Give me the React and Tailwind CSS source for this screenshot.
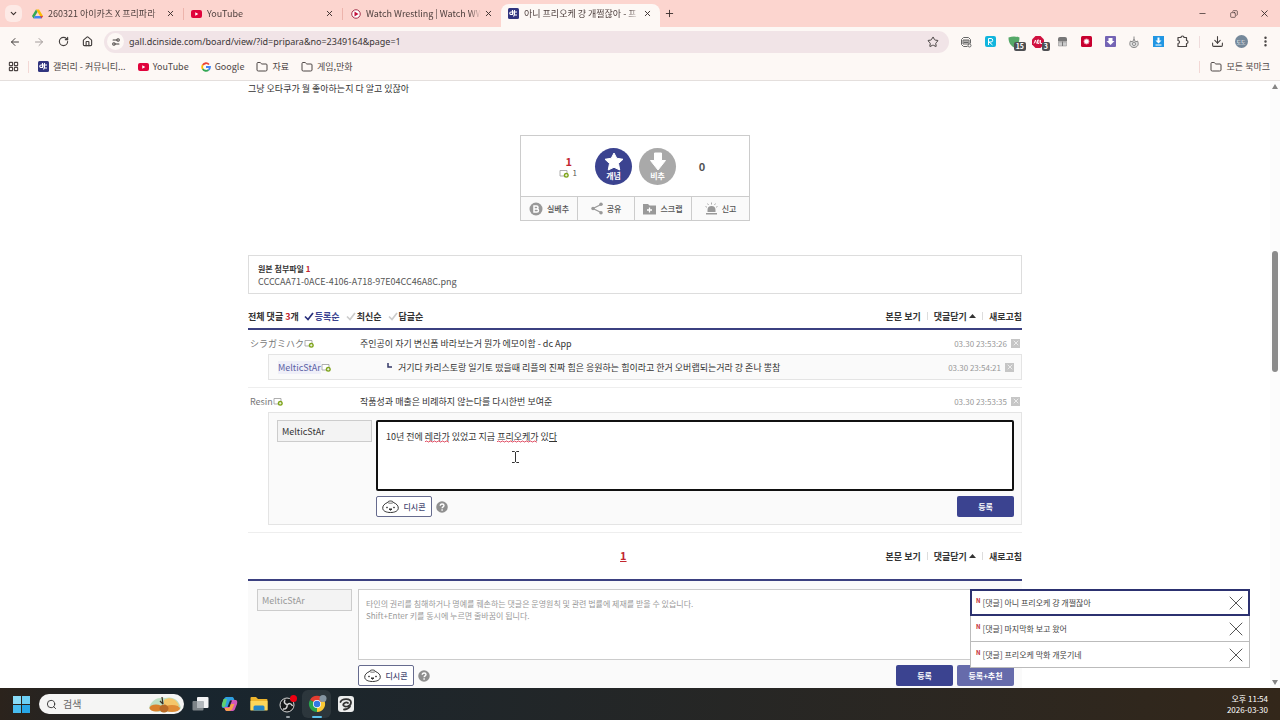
import React from "react";
import {
  ArrowLeft, ArrowRight, ChevronDown, Copy, Download, EllipsisVertical, Folder, House, LayoutGrid,
  Minus, Plus, RotateCw, Search, Settings2, Star, X,
} from "lucide-react";

const DriveIcon = () => (
  <svg width="11" height="10" viewBox="0 0 22 20">
    <path d="M8 1h6l8 13h-6z" fill="#fbbc04" />
    <path d="M8 1 0 14l3 5L11 6z" fill="#34a853" />
    <path d="M6 14h16l-3 5H3z" fill="#4285f4" />
    <path d="M16 14h6l-3 5z" fill="#ea4335" />
  </svg>
);

const YoutubeIcon = () => (
  <svg width="11" height="8" viewBox="0 0 22 16">
    <rect width="22" height="16" rx="4" fill="#e0033b" />
    <path d="M8.500 4.500v7l6-3.500z" fill="#fff" />
  </svg>
);

const WatchIcon = () => (
  <svg width="10" height="10" viewBox="0 0 20 20">
    <circle cx="10" cy="10" r="8.500" fill="#fff" stroke="#a3304a" strokeWidth="2" />
    <path d="M7 5v10l8-5z" fill="#c4103a" />
  </svg>
);

const DcIcon = () => (
  <svg width="11" height="11" viewBox="0 0 22 22">
    <rect width="22" height="22" rx="3" fill="#31357f" />
    <path d="M9 4v9H6a2.500 2.500 0 0 1 0-5h7M18 8h-3a3 3 0 0 0 0 6h3M13 4v9l-2 4" fill="none" stroke="#fff" strokeWidth="2.200" />
  </svg>
);

const GoogleIcon = () => (
  <svg width="10" height="10" viewBox="0 0 20 20" fill="none" strokeWidth="3.600">
    <path d="M16 5A8 8 0 0 0 3.500 6" stroke="#ea4335" />
    <path d="M3.500 6a8 8 0 0 0 0 8" stroke="#fbbc04" />
    <path d="M3.500 14A8 8 0 0 0 15 16" stroke="#34a853" />
    <path d="M15 16a8 8 0 0 0 3-6h-8" stroke="#4285f4" />
  </svg>
);

const NickIcon = () => (
  <svg width="10" height="9" viewBox="0 0 20 18" className="shrink-0">
    <path d="M2 3h14v11H2z" fill="#fff" stroke="#9a9a9a" strokeWidth="1.600" />
    <circle cx="14.500" cy="12.500" r="5" fill="#7fa51c" />
    <path d="M14.500 10v5M12 12.500h5" stroke="#fff" strokeWidth="1.600" />
  </svg>
);

const CheckIcon = ({ color }) => (
  <svg width="10" height="9" viewBox="0 0 20 18" className="shrink-0">
    <path d="M2 9l6 6L18 2" fill="none" stroke={color} strokeWidth="3.400" />
  </svg>
);

const DcconIcon = () => (
  <svg width="17" height="13" viewBox="0 0 34 26" fill="none" stroke="#333" strokeWidth="2">
    <path d="M11 5C4 8 1 12 1.500 17c.5 5 7 8 15.500 8s15-3 15.500-8C33 12 30 8 23 5c-1-4-11-4-12 0z" fill="#fff" />
    <path d="M11 5c3 2 9 2 12 0" strokeWidth="1.400" />
    <circle cx="10" cy="15" r="1" />
    <circle cx="24" cy="15" r="1" />
    <path d="M14 18h6l-3 2.500z" fill="#333" />
  </svg>
);

const HelpIcon = () => (
  <svg width="12" height="12" viewBox="0 0 24 24">
    <circle cx="12" cy="12" r="11.500" fill="#8f8f8f" />
    <path d="M8.500 9.500c0-5 7.500-4.500 7.500-.5 0 2.600-3.800 2.800-3.800 5.500M12.200 16.500v3" fill="none" stroke="#fff" strokeWidth="2.800" />
  </svg>
);

const tabs = [
  { icon: <DriveIcon />, title: "260321 아이카츠 X 프리파라" },
  { icon: <YoutubeIcon />, title: "YouTube" },
  { icon: <WatchIcon />, title: "Watch Wrestling | Watch WW" },
  { icon: <DcIcon />, title: "아니 프리오케 걍 개쩔잖아 - 프", active: true },
];

const Tab = ({ icon, title, active }) => (
  <div className={active
    ? "relative mt-1 flex h-[23px] min-w-0 max-w-[159px] flex-1 items-center rounded-t-lg bg-[#fdf8f5] pr-1.5 pb-1 pl-[7px]"
    : "relative mt-1 flex h-[23px] min-w-0 max-w-[159px] flex-1 items-center pr-1.5 pb-1 pl-2"}
  >
    <span className="flex w-[11px] shrink-0 justify-center">{icon}</span>
    <span className="ml-[5px] flex-1 overflow-hidden whitespace-nowrap mask-r-from-90% text-[#4d3f3d]">{title}</span>
    <button type="button" aria-label="탭 닫기" className="flex size-[14px] shrink-0 items-center justify-center">
      <X size={9} strokeWidth={2.5} />
    </button>
  </div>
);

const BrowserTabs = () => (
  <header className="flex h-[27px] shrink-0 bg-[#fcd5cf] text-[9px] leading-3 text-[#3b2f2e]">
    <button type="button" aria-label="탭 검색" className="mt-[5px] ml-[5px] flex size-[17px] items-center justify-center rounded-md bg-[#fdeae6]">
      <ChevronDown size={9} strokeWidth={3} />
    </button>
    <div className="ml-0.5 flex flex-1">
      {tabs.map((tab, i) => (
        <React.Fragment key={tab.title}>
          {(i === 1 || i === 2) && <i className="-mr-px mt-2 h-3 w-px bg-[#edb4ac]" />}
          <Tab {...tab} />
        </React.Fragment>
      ))}
      <button type="button" aria-label="새 탭" className="mb-px px-1"><Plus size={11} /></button>
    </div>
    <div className="flex">
      <button type="button" aria-label="최소화" className="flex w-[31px] items-center justify-center"><Minus size={9} /></button>
      <button type="button" aria-label="창 복원" className="flex w-[31px] items-center justify-center"><Copy size={8} className="-scale-x-100" /></button>
      <button type="button" aria-label="닫기" className="flex w-[31px] items-center justify-center"><X size={11} /></button>
    </div>
  </header>
);

const extensions = [
  { name: "캡처", icon: (
    <svg width="12" height="12" viewBox="0 0 24 24" fill="none" stroke="#666" strokeWidth="2">
      <path d="M3 7l4-4h10l4 4M3 17l4 4h8M6 8h12v8H6zM7 10h10M7 13h10M3 7v10M21 7v8" /><circle cx="19" cy="19" r="3" />
    </svg>
  ) },
  { name: "R", icon: (
    <svg width="11" height="11" viewBox="0 0 22 22">
      <rect width="22" height="22" rx="4" fill="#12b5dd" />
      <path d="M7 18V5h5a3 3 0 0 1 0 7H8l7 6" fill="none" stroke="#fff" strokeWidth="2" />
    </svg>
  ) },
  { name: "가드", badge: "15", icon: (
    <svg width="12" height="12" viewBox="0 0 24 24"><path d="M1 3c8-3 14-3 22 0 0 10-4 16-11 20C5 19 1 13 1 3z" fill="#55a868" /></svg>
  ) },
  { name: "차단", badge: "3", icon: (
    <svg width="12" height="12" viewBox="0 0 24 24">
      <path d="M7 0h10l7 7v10l-7 7H7l-7-7V7z" fill="#d0103f" />
      <path d="M4 15l3-7 2 7M11 8v7h3V8h-3M17 8v7h4" fill="none" stroke="#fff" strokeWidth="1.800" />
    </svg>
  ) },
  { name: "블록", icon: (
    <svg width="11" height="11" viewBox="0 0 22 22"><path d="M2 11V6q0-4 4-4h10q4 0 4 4v5z" fill="#777" /><path d="M3 12h16v8H3z" fill="#ccc" stroke="#888" /><path d="M11 11v9" stroke="#777" strokeWidth="2" /></svg>
  ) },
  { name: "녹화", icon: (
    <svg width="11" height="11" viewBox="0 0 22 22"><rect width="22" height="22" rx="3" fill="#c8002f" /><circle cx="11" cy="11" r="5" fill="#fff" stroke="#f19ab0" strokeWidth="2" /></svg>
  ) },
  { name: "저장", icon: (
    <svg width="11" height="11" viewBox="0 0 22 22"><rect width="22" height="22" rx="2" fill="#7464b4" /><path d="M7 4h8v6h4l-8 8-8-8h4z" fill="#fff" /></svg>
  ) },
  { name: "불꽃", icon: (
    <svg width="12" height="12" viewBox="0 0 24 24" fill="none" stroke="#888" strokeWidth="2"><path d="M12 1v5M5 10c-4 8 1 13 7 13s11-5 7-13l-4 2-3-6-3 6z" fill="#ddd" /><circle cx="12" cy="16" r="3" fill="#fff" /></svg>
  ) },
  { name: "다운로더", icon: (
    <svg width="11" height="11" viewBox="0 0 22 22"><rect width="22" height="22" fill="#2196e3" /><path d="M9 3h4v6h4l-6 6-6-6h4zM5 17h12v2H5z" fill="#fff" /></svg>
  ) },
  { name: "확장 프로그램", icon: (
    <svg width="13" height="13" viewBox="0 0 26 26" fill="none" stroke="#4a4544" strokeWidth="2.400">
      <path d="M4 5h6c0-4 6-4 6 0h5v6c4 0 4 6 0 6v6H4v-6c4 0 4-6 0-6z" strokeLinejoin="round" />
    </svg>
  ) },
];

const toolButton = "relative flex h-6 w-6 shrink-0 items-center justify-center";

const Toolbar = () => (
  <div className="flex h-[29px] shrink-0 items-center bg-[#fdf8f5] pr-[3px] pl-[3px] text-[#45403f]">
    <button type="button" aria-label="뒤로" className={toolButton}><ArrowLeft size={12} /></button>
    <button type="button" aria-label="앞으로" className={toolButton}><ArrowRight size={12} className="text-[#a39c9b]" /></button>
    <button type="button" aria-label="새로고침" className={toolButton}><RotateCw size={11} strokeWidth={2.5} /></button>
    <button type="button" aria-label="홈" className={toolButton}><House size={11} strokeWidth={2.5} /></button>
    <div className="mx-[5px] flex h-[22px] flex-1 items-center rounded-full bg-[#f1e4e7] pr-[10px] pl-[3px]">
      <span className="mr-[5px] flex size-[17px] items-center justify-center rounded-full bg-[#fdf8f5]">
        <Settings2 size={10} className="-scale-x-100" strokeWidth={2.5} />
      </span>
      <input aria-label="주소창" readOnly value="gall.dcinside.com/board/view/?id=pripara&no=2349164&page=1" className="min-w-0 flex-1 bg-transparent font-['Noto_Sans',sans-serif] text-[9px] leading-3 text-[#3a3536]" />
      <Star size={12} />
    </div>
    {extensions.map((ext) => (
      <button key={ext.name} type="button" aria-label={ext.name} className={toolButton}>
        {ext.icon}
        {ext.badge && (
          <span className="absolute right-0 bottom-[3px] rounded-xs bg-[#4e5053] px-0.5 text-[7px] leading-[9px] font-bold text-white">{ext.badge}</span>
        )}
      </button>
    ))}
    <i className="mx-[5px] h-3 w-px bg-[#efdcdc]" />
    <button type="button" aria-label="다운로드" className={toolButton}><Download size={13} /></button>
    <button type="button" aria-label="프로필" className={toolButton}>
      <span className="size-[13px] rounded-full bg-[#75889a] text-center text-[5px] leading-[13px] text-white">도도</span>
    </button>
    <button type="button" aria-label="메뉴" className={toolButton}><EllipsisVertical size={13} strokeWidth={2.5} /></button>
  </div>
);

const bookmarks = [
  { label: "갤러리 - 커뮤니티...", icon: <DcIcon /> },
  { label: "YouTube", icon: <YoutubeIcon /> },
  { label: "Google", icon: <GoogleIcon /> },
  { label: "자료", icon: <Folder size={12} /> },
  { label: "게임,만화", icon: <Folder size={12} /> },
];

const Bookmarks = () => (
  <nav className="flex h-[25px] shrink-0 items-center border-b border-[#e4dfdd] bg-[#fdf8f5] pb-[3px] pl-2 text-[9px] leading-3 text-[#4d4645]">
    <LayoutGrid size={11} strokeWidth={2.5} />
    <i className="mx-[9px] h-3 w-px bg-[#f3d8d5]" />
    <div className="flex gap-3">
      {bookmarks.map((item) => (
        <a key={item.label} href="#" className="flex items-center gap-1 whitespace-nowrap">{item.icon}{item.label}</a>
      ))}
    </div>
    <i className="mr-[10px] ml-auto h-3 w-px bg-[#f3d8d5]" />
    <a href="#" className="flex items-center gap-[5px] pr-[10px] whitespace-nowrap"><Folder size={12} />모든 북마크</a>
  </nav>
);

const voteActions = [
  { label: "실베추", icon: (
    <svg width="14" height="14" viewBox="0 0 28 28"><circle cx="14" cy="14" r="13" fill="#999" /><path d="M10 8h5a3 3 0 0 1 0 6h-5zM10 14h6a3 3 0 0 1 0 6h-6z" fill="none" stroke="#fff" strokeWidth="3" /></svg>
  ) },
  { label: "공유", icon: (
    <svg width="12" height="13" viewBox="0 0 24 26" fill="#999"><path d="M20 5 4 13l16 8" fill="none" stroke="#999" strokeWidth="2.500" /><circle cx="20" cy="4.500" r="3.500" /><circle cx="4" cy="13" r="3.500" /><circle cx="20" cy="21.500" r="3.500" /></svg>
  ) },
  { label: "스크랩", icon: (
    <svg width="13" height="12" viewBox="0 0 26 24"><path d="M0 2h10l3 3h13v18H0z" fill="#999" /><path d="M13 9v10M8 14h10" stroke="#fff" strokeWidth="2.600" /></svg>
  ) },
  { label: "신고", icon: (
    <svg width="13" height="13" viewBox="0 0 26 26"><path d="M5 20v-4a8 8 0 0 1 16 0v4zM2 22h22v3H2z" fill="#999" /><path d="M13 1v4M5 3l2 3M21 3l-2 3M1 9l3 1.500M25 9l-3 1.500" stroke="#999" strokeWidth="1.600" /></svg>
  ) },
];

const VoteBox = () => (
  <section className="mx-auto mt-[38px] w-[230px] border border-[#ccc]">
    <div className="flex h-[60px] items-center">
      <div className="w-[74px] pt-0.5 pr-[18px] text-right">
        <p className="pr-[5px] text-[11px] leading-3 font-bold text-[#c3262f]">1</p>
        <p className="flex items-center justify-end gap-1 text-[8px] leading-3 text-[#555]"><NickIcon />1</p>
      </div>
      <button type="button" className="flex size-[37px] flex-col items-center rounded-full bg-[#3b4390] pt-1 text-[8px] leading-[10px] font-bold text-white">
        <svg width="20" height="19" viewBox="0 0 40 38"><path d="M20 2l5.500 10.500L38 14.500l-9 8.500 2.500 13L20 30.500 8.500 36 11 23 2 14.500l12.500-2z" fill="#fff" stroke="#fff" strokeWidth="2" strokeLinejoin="round" /></svg>
        개념
      </button>
      <button type="button" className="ml-[7px] flex size-[37px] flex-col items-center rounded-full bg-[#a9a9a9] pt-1 text-[8px] leading-[10px] font-bold text-white">
        <svg width="18" height="19" viewBox="0 0 36 38"><path d="M11 2h14v15h8L18 36 3 17h8z" fill="#fff" stroke="#fff" strokeWidth="2" strokeLinejoin="round" /></svg>
        비추
      </button>
      <p className="w-[52px] text-center text-[11px] leading-3 font-bold text-[#555]">0</p>
    </div>
    <div className="grid h-[24px] grid-cols-4 divide-x divide-[#ccc] border-t border-[#ccc] bg-[#fafafa]">
      {voteActions.map((action) => (
        <button key={action.label} type="button" className="flex items-center justify-center gap-1 text-[8px] leading-3 font-medium text-[#555]">
          {action.icon}{action.label}
        </button>
      ))}
    </div>
  </section>
);

const CommentLinks = () => (
  <div className="flex items-center">
    <a href="#">본문 보기</a>
    <i className="mx-[6px] h-2 w-px bg-[#ddd]" />
    <a href="#" className="flex items-center gap-0.5">댓글닫기
      <svg width="7" height="4" viewBox="0 0 14 8"><path d="M7 0l7 8H0z" fill="#333" /></svg>
    </a>
    <i className="mx-[6px] h-2 w-px bg-[#ddd]" />
    <a href="#">새로고침</a>
  </div>
);

const DateCell = ({ date }) => (
  <div className="ml-auto flex items-center gap-1 text-[8px] text-[#999]">
    <time>{date}</time>
    <button type="button" aria-label="댓글 삭제" className="flex size-[9px] items-center justify-center bg-[#c6c6c6] text-white"><X size={8} /></button>
  </div>
);

const Comment = ({ nick, text, date }) => (
  <div className="flex h-6 items-center pt-0.5 pr-0.5 pl-0.5">
    <div className="flex w-[110px] items-center text-[#777]">{nick}<NickIcon /></div>
    <p>{text}</p>
    <DateCell date={date} />
  </div>
);

const submitButton = "h-[21px] w-[57px] rounded-xs bg-[#3b4390] text-[8px] leading-3 font-bold text-white";

const CommentForm = ({ disabled, buttons, children }) => (
  <form className="flex items-start" onSubmit={(e) => e.preventDefault()}>
    <input
      aria-label="닉네임"
      readOnly
      value="MelticStAr"
      className={disabled
        ? "mr-[6px] h-[22px] w-[95px] shrink-0 border border-[#ccc] bg-[#f3f3f3] px-1 text-[9px] leading-3 text-[#999]"
        : "mr-1 h-[22px] w-[95px] shrink-0 border border-[#ccc] bg-[#f3f3f3] px-1 text-[9px] leading-3 text-[#333]"}
    />
    <div className="min-w-0 flex-1">
      {children}
      <div className="mt-[5px] flex items-center">
        <button type="button" className="flex h-[21px] w-[56px] items-center justify-center gap-1 rounded-xs border border-[#666b8e] bg-white text-[8px] leading-3 font-medium text-[#444870]">
          <DcconIcon />디시콘
        </button>
        <button type="button" aria-label="도움말" className="ml-1"><HelpIcon /></button>
        <div className="ml-auto flex gap-1">{buttons}</div>
      </div>
    </div>
  </form>
);

const Squiggle = ({ className }) => (
  <svg className={className} height="3">
    <defs>
      <pattern id="wave" width="4" height="3" patternUnits="userSpaceOnUse">
        <path d="M0 2l1-1h1l1 1h1" fill="none" stroke="#e0566b" />
      </pattern>
    </defs>
    <rect width="100%" height="3" fill="url(#wave)" />
  </svg>
);

const Gallery = () => (
  <main className="mx-auto w-full max-w-[774px] text-[9px] leading-[13px] text-[#333]">
    <p className="h-4 leading-4">그냥 오타쿠가 뭘 좋아하는지 다 알고 있잖아</p>
    <VoteBox />

    <section className="mt-[34px] border border-[#ddd] px-[9px] pt-[6px] pb-[5px]">
      <h2 className="text-[8px] font-bold">원본 첨부파일 <span className="text-[#c3262f]">1</span></h2>
      <a href="#" className="block text-[#555]">CCCCAA71-0ACE-4106-A718-97E04CC46A8C.png</a>
    </section>

    <div className="mt-3 flex h-6 items-center border-b-2 border-[#3b4080] pb-0.5 font-bold">
      <h2>전체 댓글 <span className="text-[#c3262f]">3</span>개</h2>
      <div className="ml-[5px] flex gap-[6px]">
        <button type="button" className="flex items-center gap-px text-[#3b4390]"><CheckIcon color="#29307d" />등록순</button>
        <button type="button" className="flex items-center gap-px"><CheckIcon color="#ccc" />최신순</button>
        <button type="button" className="flex items-center gap-px"><CheckIcon color="#ccc" />답글순</button>
      </div>
      <div className="ml-auto"><CommentLinks /></div>
    </div>

    <ul>
      <li className="border-b border-[#eee] pb-[7px]">
        <Comment nick="シラガミハク" text="주인공이 자기 변신폼 바라보는거 뭔가 에모이함 - dc App" date="03.30 23:53:26" />
        <div className="ml-5 flex h-[26px] items-center border border-[#e4e4e4] bg-[#fafafa] pr-[7px] pl-[9px]">
          <div className="flex w-[109px] items-center text-[#5c5fa5]"><span className="bg-[#efeff8]">MelticStAr</span><NickIcon /></div>
          <svg width="5" height="5" viewBox="0 0 5 5" className="mr-[6px] mb-1"><path d="M1 0v4h4" fill="none" stroke="#343968" strokeWidth="1.500" /></svg>
          <p>거기다 카리스토랑 일기토 떴을때 리플의 진짜 힘은 응원하는 힘이라고 한거 오버랩되는거라 걍 존나 뽕참</p>
          <DateCell date="03.30 23:54:21" />
        </div>
      </li>
      <li className="border-b border-[#eee] pb-[7px]">
        <Comment nick="Resin" text="작품성과 매출은 비례하지 않는다를 다시한번 보여준" date="03.30 23:53:35" />
        <div className="ml-5 border border-[#e4e4e4] bg-[#fafafa] py-[7px] pr-[7px] pl-2">
          <CommentForm buttons={<button type="submit" className={submitButton}>등록</button>}>
            <div className="relative h-[71px]">
              <textarea
                aria-label="답글 내용"
                defaultValue="10년 전에 레라가 있었고 지금 프리오케가 있다"
                className="block h-full w-full resize-none rounded-xs border-2 border-[#111] bg-white px-2 py-2 text-[9px] leading-[13px] outline-none"
              />
              <Squiggle className="absolute top-[20px] left-[49px] w-6" />
              <Squiggle className="absolute top-[20px] left-[121px] w-10" />
              <i className="absolute top-[21px] left-[173px] h-px w-2 bg-[#333]" />
              <svg width="7" height="12" viewBox="0 0 7 12" className="absolute top-[31px] left-[136px]">
                <path d="M0 .5h2.500l1 1 1-1H7M3.500 1v10M0 11.500h2.500l1-1 1 1H7" fill="none" stroke="#333" />
              </svg>
            </div>
          </CommentForm>
        </div>
      </li>
    </ul>

    <div className="flex h-[46px] items-center font-bold">
      <div className="flex-1 pl-[113px] text-center">
        <a href="#" className="text-[11px] text-[#c3262f] underline">1</a>
      </div>
      <CommentLinks />
    </div>

    <section className="border-t-2 border-[#3b4080] bg-[#fafafa] pt-2 pr-2 pb-2 pl-[9px]">
      <CommentForm
        disabled
        buttons={(
          <>
            <button type="submit" className={submitButton}>등록</button>
            <button type="button" className="h-[21px] w-[57px] rounded-xs bg-[#666bab] text-[8px] leading-3 font-bold text-white">등록+추천</button>
          </>
        )}
      >
        <textarea
          aria-label="댓글 내용"
          placeholder={"타인의 권리를 침해하거나 명예를 훼손하는 댓글은 운영원칙 및 관련 법률에 제재를 받을 수 있습니다.\nShift+Enter 키를 동시에 누르면 줄바꿈이 됩니다."}
          className="block h-[71px] w-full resize-none border border-[#ccc] bg-white px-[7px] py-2 text-[8px] leading-3 placeholder:text-[#999]"
        />
      </CommentForm>
    </section>
  </main>
);

const alerts = ["아니 프리오케 걍 개쩔잖아", "마지막화 보고 왔어", "프리오케 막화 개웃기네"];

const AlertList = () => (
  <aside className="absolute right-[30px] bottom-[20px] w-[280px] text-[8px] leading-3 text-[#444]">
    {alerts.map((text, i) => (
      <div
        key={text}
        className={i === 0
          ? "flex h-[27px] items-center border-2 border-[#2c3170] bg-white pl-1"
          : "flex h-[26px] items-center border border-t-0 border-[#bbb] bg-white pr-px pl-[5px]"}
      >
        <b className="mb-1 text-[6px] leading-2 text-[#c3262f]">N</b>
        <a href="#" className="ml-0.5">[댓글] {text}</a>
        <button type="button" aria-label="알림 닫기" className="ml-auto text-[#555]"><X size={24} strokeWidth={1} /></button>
      </div>
    ))}
  </aside>
);

const ScrollBar = () => (
  <div className="flex w-[10px] shrink-0 flex-col items-center bg-[#fcfcfc] py-[3px]">
    <svg width="6" height="5" viewBox="0 0 6 5"><path d="M3 0l3 5H0z" fill="#858585" /></svg>
    <div className="flex w-full flex-1 flex-col items-center">
      <div className="grow-[162]" />
      <div className="w-[6px] grow-[121] rounded-full bg-[#8b8b8b]" />
      <div className="grow-[308]" />
    </div>
    <svg width="6" height="5" viewBox="0 0 6 5"><path d="M3 5l3-5H0z" fill="#858585" /></svg>
  </div>
);

const taskIcons = [
  { name: "작업 보기", icon: (
    <svg width="17" height="16" viewBox="0 0 34 32"><rect x="10" y="2" width="23" height="22" rx="2" fill="#f2f3f4" /><rect x="1" y="10" width="22" height="19" rx="2" fill="#7c8488" /><path d="M10 10h13v14H10z" fill="#b1b7bb" /></svg>
  ) },
  { name: "Copilot", icon: (
    <svg width="17" height="16" viewBox="0 0 34 32">
      <path d="M12 2h10c4 0 4 5 6 8h-9L14 24H6c-5 0-5-4-4-8L6 6c1-3 3-4 6-4z" fill="#2f9fe0" />
      <path d="M2 16l3-10h7L8 22c-4 1-7-1-6-6z" fill="#62cf6e" />
      <path d="M22 30H12c-4 0-4-5-6-8h9l5-14h8c5 0 5 4 4 8l-4 10c-1 3-3 4-6 4z" fill="#d457b8" />
      <path d="M12 30c-3 0-4-4-5-6h9l3-8h8l-5 11c-2 3-6 3-10 3z" fill="#f6a04b" />
      <path d="M13 22l5-13h4l-5 13z" fill="#14242d" />
    </svg>
  ) },
  { name: "파일 탐색기", icon: (
    <svg width="18" height="16" viewBox="0 0 36 32"><path d="M1 4q0-2 2-2h9l4 4h17q2 0 2 2v20H1z" fill="#eeb52d" /><path d="M1 10h34v19H1z" fill="#fcd65a" /><path d="M7 29v-7q0-3 3-3h16q3 0 3 3v7z" fill="#2486c8" /></svg>
  ) },
  { name: "OBS", running: true, icon: (
    <svg width="19" height="19" viewBox="0 0 38 38" fill="none" stroke="#d6d6d6" strokeWidth="2"><circle cx="18" cy="20" r="14" fill="#151819" /><path d="M14 9c-3 6 0 10 5 10M29 22c-3-6-8-6-10-2M10 28c6 1 9-4 8-8" strokeWidth="3" /><circle cx="31" cy="7" r="7" fill="#f00012" stroke="none" /></svg>
  ) },
  { name: "Chrome", active: true, icon: (
    <svg width="20" height="20" viewBox="0 0 40 40">
      <path d="M20 20 6 12a16 16 0 0 1 28 0z" fill="#e53d30" /><path d="M20 20 34 12a16 16 0 0 1-14 24z" fill="#fcc934" /><path d="M20 20v16A16 16 0 0 1 6 12z" fill="#2ba24c" />
      <circle cx="20" cy="20" r="8" fill="#fff" /><circle cx="20" cy="20" r="6.500" fill="#3478e5" /><circle cx="32" cy="9" r="7" fill="#8595a2" />
    </svg>
  ) },
  { name: "Clip Studio", icon: (
    <svg width="16" height="16" viewBox="0 0 32 32"><rect width="32" height="32" rx="6" fill="#eceded" /><path d="M5 12C8 4 26 4 26 13c0 8-12 10-15 6-2-4 5-8 9-5M12 27c5 0 9-2 12-6" fill="none" stroke="#333" strokeWidth="3.600" strokeLinecap="round" /></svg>
  ) },
];

const Taskbar = () => (
  <footer className="flex h-8 shrink-0 items-center bg-linear-to-r from-[#2b231c] via-[#18252e] via-15% to-[#33271a] pr-3 pl-[13px] text-white">
    <button type="button" aria-label="시작" className="grid size-[17px] grid-cols-2 gap-px">
      <i className="bg-[#8adcf8]" /><i className="bg-[#6dd0f6]" /><i className="bg-[#48bdf0]" /><i className="bg-[#27a7e8]" />
    </button>
    <label className="ml-[9px] flex h-5 w-[145px] items-center rounded-full bg-[#f5f5f4] pr-[3px] pl-[7px] text-[#333]">
      <Search size={11} />
      <input type="text" aria-label="검색" placeholder="검색" className="ml-[6px] min-w-0 flex-1 text-[10px] leading-3 placeholder:text-[#666]" />
      <svg width="32" height="17" viewBox="0 0 64 34">
        <path d="M0 24C4 8 18 2 32 4c14-4 28 2 32 20-6 10-58 12-64 0z" fill="#bfe0c4" />
        <path d="M30 8c12-8 26-2 30 12H30z" fill="#f4c66a" />
        <ellipse cx="14" cy="24" rx="13" ry="7" fill="#d9822b" /><ellipse cx="46" cy="25" rx="16" ry="7" fill="#e08c35" /><ellipse cx="30" cy="25" rx="9" ry="8" fill="#b96a26" />
        <path d="M26 2l2 14M22 10l6 6" stroke="#3d3024" strokeWidth="2.500" />
      </svg>
    </label>
    <div className="ml-0.5 flex">
      {taskIcons.map(({ name, icon, active, running }) => (
        <button key={name} type="button" aria-label={name} className={active
          ? "relative flex h-7 w-[29px] items-center justify-center rounded-md bg-white/8"
          : "relative flex h-7 w-[29px] items-center justify-center"}
        >
          {icon}
          {active && <i className="absolute bottom-0 h-0.5 w-[10px] rounded-full bg-[#5cc2ee]" />}
          {running && <i className="absolute bottom-0 h-0.5 w-1 rounded-full bg-[#9aa2a7]" />}
        </button>
      ))}
    </div>
    <div className="ml-auto text-right text-[8px] leading-[11px]">
      <p>오후 11:54</p>
      <p>2026-03-30</p>
    </div>
  </footer>
);

const App = () => {
  return (
    <div className="flex h-screen flex-col overflow-hidden bg-white font-['Noto_Sans_CJK_KR',sans-serif]">
      <BrowserTabs />
      <Toolbar />
      <Bookmarks />
      <div className="relative flex min-h-0 flex-1">
        <div className="min-w-0 flex-1 overflow-hidden">
          <Gallery />
        </div>
        <ScrollBar />
        <AlertList />
      </div>
      <Taskbar />
    </div>
  );
};

export default App;
